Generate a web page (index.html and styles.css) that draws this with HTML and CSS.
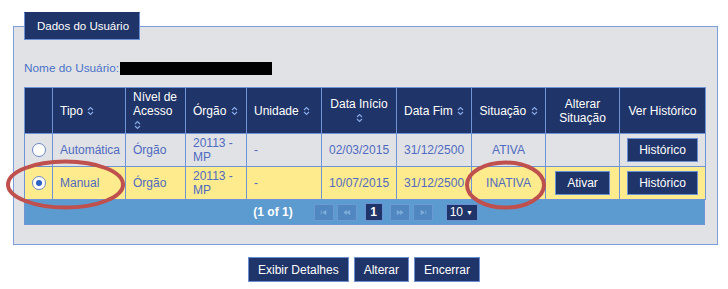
FILE: index.html
```html
<!DOCTYPE html>
<html lang="pt">
<head>
<meta charset="utf-8">
<title>Dados do Usuário</title>
<link rel="stylesheet" href="styles.css">
</head>
<body>
<div class="page">
  <fieldset class="panel">
    <legend class="panel-title">Dados do Usuário</legend>
    <div class="user-name"><span class="label">Nome do Usuário:</span><span class="redacted"></span></div>
    <div class="grid">
      <table class="data">
        <colgroup>
          <col class="c-sel"><col class="c-tipo"><col class="c-nivel"><col class="c-orgao"><col class="c-unid"><col class="c-ini"><col class="c-fim"><col class="c-sit"><col class="c-alt"><col class="c-hist">
        </colgroup>
        <thead>
          <tr>
            <th></th>
            <th class="left">Tipo <svg class="sort" viewBox="0 0 7 10"><path d="M1 4 L3.5 1.5 L6 4 M1 6 L3.5 8.5 L6 6"/></svg></th>
            <th class="left">Nível de<br>Acesso<br><svg class="sort" viewBox="0 0 7 10"><path d="M1 4 L3.5 1.5 L6 4 M1 6 L3.5 8.5 L6 6"/></svg></th>
            <th class="left">Órgão <svg class="sort" viewBox="0 0 7 10"><path d="M1 4 L3.5 1.5 L6 4 M1 6 L3.5 8.5 L6 6"/></svg></th>
            <th class="left">Unidade <svg class="sort" viewBox="0 0 7 10"><path d="M1 4 L3.5 1.5 L6 4 M1 6 L3.5 8.5 L6 6"/></svg></th>
            <th>Data Início<br><svg class="sort" viewBox="0 0 7 10"><path d="M1 4 L3.5 1.5 L6 4 M1 6 L3.5 8.5 L6 6"/></svg></th>
            <th>Data Fim <svg class="sort" viewBox="0 0 7 10"><path d="M1 4 L3.5 1.5 L6 4 M1 6 L3.5 8.5 L6 6"/></svg></th>
            <th>Situação <svg class="sort" viewBox="0 0 7 10"><path d="M1 4 L3.5 1.5 L6 4 M1 6 L3.5 8.5 L6 6"/></svg></th>
            <th>Alterar<br>Situação</th>
            <th>Ver Histórico</th>
          </tr>
        </thead>
        <tbody>
          <tr class="row">
            <td class="sel"><span class="radio"></span></td>
            <td class="left">Automática</td>
            <td class="left">Órgão</td>
            <td class="left">20113 -<br>MP</td>
            <td class="left">-</td>
            <td>02/03/2015</td>
            <td>31/12/2500</td>
            <td>ATIVA</td>
            <td></td>
            <td><button class="btn small">Histórico</button></td>
          </tr>
          <tr class="row selected">
            <td class="sel"><span class="radio checked"></span></td>
            <td class="left">Manual</td>
            <td class="left">Órgão</td>
            <td class="left">20113 -<br>MP</td>
            <td class="left">-</td>
            <td>10/07/2015</td>
            <td>31/12/2500</td>
            <td>INATIVA</td>
            <td><button class="btn small">Ativar</button></td>
            <td><button class="btn small">Histórico</button></td>
          </tr>
        </tbody>
      </table>
      <div class="paginator">
        <span class="page-info">(1 of 1)</span>
        <span class="pg-btn first"><svg viewBox="0 0 10 6"><path d="M1.5 0.5 V5.5 M7.5 0.5 L3.5 3 L7.5 5.5 Z"/></svg></span>
        <span class="pg-btn"><svg viewBox="0 0 10 6"><path d="M4.5 0.5 L1 3 L4.5 5.5 Z M8.5 0.5 L5 3 L8.5 5.5 Z"/></svg></span>
        <span class="pg-num">1</span>
        <span class="pg-btn"><svg viewBox="0 0 10 6"><path d="M1.5 0.5 L5 3 L1.5 5.5 Z M5.5 0.5 L9 3 L5.5 5.5 Z"/></svg></span>
        <span class="pg-btn"><svg viewBox="0 0 10 6"><path d="M2.5 0.5 L6.5 3 L2.5 5.5 Z M8.5 0.5 V5.5"/></svg></span>
        <span class="pg-select">10 <span class="caret">▼</span></span>
      </div>
    </div>
  </fieldset>
  <div class="actions">
    <button class="btn">Exibir Detalhes</button>
    <button class="btn">Alterar</button>
    <button class="btn">Encerrar</button>
  </div>
  <svg class="marks" viewBox="0 0 728 289" width="728" height="289">
    <ellipse cx="65.5" cy="184.5" rx="57.5" ry="23" />
    <ellipse cx="505.5" cy="185" rx="38.5" ry="22.5" />
  </svg>
</div>
</body>
</html>
```

FILE: styles.css
```css
* { box-sizing: border-box; }
html, body { margin: 0; padding: 0; background: #ffffff; }
body {
  font-family: "Liberation Sans", Arial, sans-serif;
  font-size: 12px;
  color: #4d6cc1;
}
.page {
  position: relative;
  width: 728px;
  height: 289px;
  overflow: hidden;
}
.panel {
  margin: 12px 0 0 13px;
  width: 705px;
  border: 1px solid #7d9edc;
  background: #e1e2e6;
  padding: 20px 11px 19px 10px;
  min-width: 0;
}
.panel-title {
  background: #1f3468;
  color: #ffffff;
  border: 1px solid #6a8fd3;
  border-top-color: #1f3468;
  padding: 0 10px 0 12px;
  height: 28px;
  line-height: 26px;
  font-size: 11.5px;
  margin-left: 0;
}
.user-name {
  display: flex;
  align-items: center;
  height: 16px;
  line-height: 16px;
  color: #4b72c6;
  font-size: 11.8px;
}
.redacted {
  display: inline-block;
  width: 152px;
  height: 13px;
  background: #000000;
  margin-left: 1px;
}
.grid {
  margin-top: 11px;
  width: 681px;
}
.data {
  width: 681px;
  border-collapse: collapse;
  table-layout: fixed;
}
.c-sel { width: 28px; }
.c-tipo { width: 73px; }
.c-nivel { width: 60px; }
.c-orgao { width: 61px; }
.c-unid { width: 75px; }
.c-ini { width: 75px; }
.c-fim { width: 75px; }
.c-sit { width: 74px; }
.c-alt { width: 74px; }
.c-hist { width: 86px; }
.data th, .data td {
  border: 1px solid #6f94d6;
  text-align: center;
  vertical-align: middle;
  padding: 0 7px;
}
.data th {
  background: #1f3468;
  color: #ffffff;
  font-weight: normal;
  height: 46px;
  line-height: 14px;
  font-size: 12px;
}
.data .left { text-align: left; }
.sort {
  width: 7px;
  height: 10px;
  vertical-align: -1px;
  margin-left: 1px;
}
.sort path {
  fill: none;
  stroke: #86a8e6;
  stroke-width: 1.2;
}
.row td {
  height: 33px;
  line-height: 14px;
  background: #e1e2e6;
  color: #4f6ac0;
}
.row.selected td { background: #fdeb8d; }
.data td.sel { padding: 0; }
.radio {
  display: block;
  width: 14px;
  height: 14px;
  margin: 0 auto;
  border-radius: 50%;
  background: #ffffff;
  border: 1px solid #6b86c8;
  position: relative;
}
.radio.checked::after {
  content: "";
  position: absolute;
  left: 3px;
  top: 3px;
  width: 6px;
  height: 6px;
  border-radius: 50%;
  background: #2a63c4;
}
.btn {
  font-family: "Liberation Sans", Arial, sans-serif;
  font-size: 12px;
  color: #ffffff;
  background: #1f3468;
  border: 1px solid #6a8fd3;
  height: 25px;
  padding: 0 9px;
  margin: 0;
  cursor: pointer;
}
.btn.small {
  height: 24px;
  padding: 0 11px;
}
.paginator {
  height: 25px;
  background: #5c9bd0;
  border: 1px solid #6f94d6;
  border-top: 0;
  display: flex;
  align-items: center;
  justify-content: center;
  padding-left: 2px;
}
.page-info {
  color: #ffffff;
  font-weight: bold;
  font-size: 12px;
  margin-right: 21px;
}
.pg-btn {
  width: 20px;
  height: 17px;
  background: #5087c0;
  border: 1px solid #6b9ad0;
  display: flex;
  align-items: center;
  justify-content: center;
  margin-right: 3px;
}
.pg-btn svg { width: 8px; height: 5px; }
.pg-btn path { fill: #7eaedb; stroke: #7eaedb; stroke-width: 1; }
.pg-num {
  width: 18px;
  height: 18px;
  background: #1f3468;
  border: 1px solid #6a8fd3;
  color: #ffffff;
  font-weight: bold;
  font-size: 12px;
  display: flex;
  align-items: center;
  justify-content: center;
  margin: 0 7px 0 5px;
}
.pg-select {
  width: 32px;
  height: 17px;
  background: #1f3468;
  border: 1px solid #6a8fd3;
  color: #ffffff;
  font-size: 12px;
  display: flex;
  align-items: center;
  padding-left: 3px;
  margin-left: 10px;
}
.caret { font-size: 7px; margin-left: 3px; }
.actions {
  display: flex;
  justify-content: center;
  gap: 5px;
  margin-top: 12px;
}
.marks {
  position: absolute;
  left: 0;
  top: 0;
  pointer-events: none;
}
.marks ellipse {
  fill: none;
  stroke: #c0504d;
  stroke-width: 4;
}
```
